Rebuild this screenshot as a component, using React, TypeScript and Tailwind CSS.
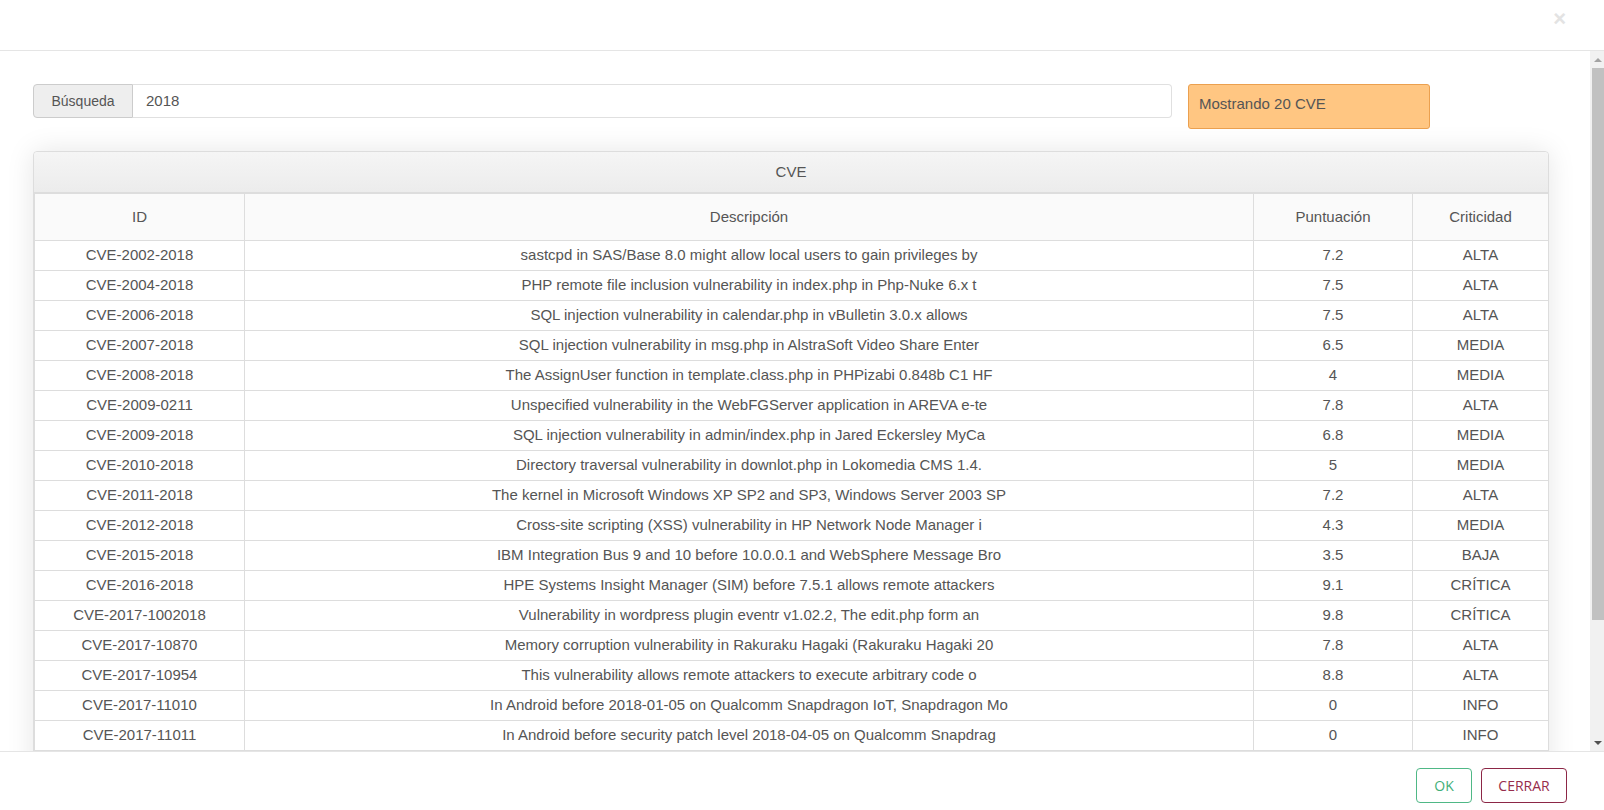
import React from "react";

interface CveRow {
	id: string;
	description: string;
	score: string;
	level: string;
}

const rows: CveRow[] = [
	{ id: "CVE-2002-2018", description: "sastcpd in SAS/Base 8.0 might allow local users to gain privileges by", score: "7.2", level: "ALTA" },
	{ id: "CVE-2004-2018", description: "PHP remote file inclusion vulnerability in index.php in Php-Nuke 6.x t", score: "7.5", level: "ALTA" },
	{ id: "CVE-2006-2018", description: "SQL injection vulnerability in calendar.php in vBulletin 3.0.x allows", score: "7.5", level: "ALTA" },
	{ id: "CVE-2007-2018", description: "SQL injection vulnerability in msg.php in AlstraSoft Video Share Enter", score: "6.5", level: "MEDIA" },
	{ id: "CVE-2008-2018", description: "The AssignUser function in template.class.php in PHPizabi 0.848b C1 HF", score: "4", level: "MEDIA" },
	{ id: "CVE-2009-0211", description: "Unspecified vulnerability in the WebFGServer application in AREVA e-te", score: "7.8", level: "ALTA" },
	{ id: "CVE-2009-2018", description: "SQL injection vulnerability in admin/index.php in Jared Eckersley MyCa", score: "6.8", level: "MEDIA" },
	{ id: "CVE-2010-2018", description: "Directory traversal vulnerability in downlot.php in Lokomedia CMS 1.4.", score: "5", level: "MEDIA" },
	{ id: "CVE-2011-2018", description: "The kernel in Microsoft Windows XP SP2 and SP3, Windows Server 2003 SP", score: "7.2", level: "ALTA" },
	{ id: "CVE-2012-2018", description: "Cross-site scripting (XSS) vulnerability in HP Network Node Manager i", score: "4.3", level: "MEDIA" },
	{ id: "CVE-2015-2018", description: "IBM Integration Bus 9 and 10 before 10.0.0.1 and WebSphere Message Bro", score: "3.5", level: "BAJA" },
	{ id: "CVE-2016-2018", description: "HPE Systems Insight Manager (SIM) before 7.5.1 allows remote attackers", score: "9.1", level: "CRÍTICA" },
	{ id: "CVE-2017-1002018", description: "Vulnerability in wordpress plugin eventr v1.02.2, The edit.php form an", score: "9.8", level: "CRÍTICA" },
	{ id: "CVE-2017-10870", description: "Memory corruption vulnerability in Rakuraku Hagaki (Rakuraku Hagaki 20", score: "7.8", level: "ALTA" },
	{ id: "CVE-2017-10954", description: "This vulnerability allows remote attackers to execute arbitrary code o", score: "8.8", level: "ALTA" },
	{ id: "CVE-2017-11010", description: "In Android before 2018-01-05 on Qualcomm Snapdragon IoT, Snapdragon Mo", score: "0", level: "INFO" },
	{ id: "CVE-2017-11011", description: "In Android before security patch level 2018-04-05 on Qualcomm Snapdrag", score: "0", level: "INFO" },
	{ id: "CVE-2017-11012", description: "In Android before security patch level 2018-04-05 on Qualcomm Snapdrag", score: "0", level: "INFO" },
	{ id: "CVE-2017-11013", description: "In Android before security patch level 2018-04-05 on Qualcomm Snapdrag", score: "0", level: "INFO" },
	{ id: "CVE-2017-11014", description: "In Android before security patch level 2018-04-05 on Qualcomm Snapdrag", score: "0", level: "INFO" },
];

const cell = "border border-[#dddddd] text-center px-2";

const Scrollbar = () => (
	<div className="w-[14px] h-full bg-[#f1f1f1] flex flex-col items-end">
		<div className="w-[12px] h-[17px] flex items-center justify-center">
			<div className="w-0 h-0 border-l-[4px] border-r-[4px] border-b-[4px] border-l-transparent border-r-transparent border-b-[#a3a3a3]" />
		</div>
		<div className="w-[12px] h-[552px] bg-[#c1c1c1]" />
		<div className="flex-1" />
		<div className="w-[12px] h-[17px] flex items-center justify-center">
			<div className="w-0 h-0 border-l-[4px] border-r-[4px] border-t-[4px] border-l-transparent border-r-transparent border-t-[#505050]" />
		</div>
	</div>
);

export default function App() {
	return (
		<div className="w-[1604px] h-[810px] bg-white flex flex-col overflow-hidden font-['Liberation_Sans',Arial,sans-serif] text-[#555555]">
			<div className="h-[51px] shrink-0 border-b border-[#e5e5e5] flex items-start justify-end pr-[38px] pt-[6px]">
				<span className="text-[22px] leading-[26px] font-bold text-[#e3e3e3]">×</span>
			</div>

			<div className="h-[700px] shrink-0 flex">
				<div className="flex-1 overflow-hidden pl-[33px] pt-[33px]">
					<div className="flex items-start">
						<div className="w-[1139px] h-[34px] flex">
							<div className="w-[100px] shrink-0 bg-[#eeeeee] border border-[#cccccc] rounded-l-[4px] flex items-center justify-center text-[14px]">
								Búsqueda
							</div>
							<div className="flex-1 border border-l-0 border-[#e0e0e0] rounded-r-[4px] flex items-center pl-[13px] text-[15px]">
								2018
							</div>
						</div>
						<div className="ml-[16px] w-[242px] h-[45px] bg-[#ffc682] border border-[#eba04f] rounded-[3px] flex items-center pl-[10px] pb-[4px] text-[15px]">
							Mostrando 20 CVE
						</div>
					</div>

					<div className="mt-[22px] w-[1516px] border border-[#dddddd] rounded-[4px] shadow-[0_0_28px_rgba(0,0,0,0.10)] bg-white">
						<div className="h-[41px] bg-gradient-to-b from-[#f5f5f5] to-[#ececec] border-b border-[#dddddd] rounded-t-[4px] flex items-center justify-center text-[15px]">
							CVE
						</div>
						<table className="w-[1514px] border-collapse table-fixed text-[15px]">
							<colgroup>
								<col className="w-[210px]" />
								<col className="w-[1009px]" />
								<col className="w-[159px]" />
								<col className="w-[136px]" />
							</colgroup>
							<thead>
								<tr className="h-[47px] bg-[#fafafa]">
									<th className={`${cell} font-normal`}>ID</th>
									<th className={`${cell} font-normal`}>Descripción</th>
									<th className={`${cell} font-normal`}>Puntuación</th>
									<th className={`${cell} font-normal`}>Criticidad</th>
								</tr>
							</thead>
							<tbody>
								{rows.map((row) => (
									<tr key={row.id} className="h-[30px]">
										<td className={cell}>{row.id}</td>
										<td className={`${cell} whitespace-nowrap overflow-hidden`}>{row.description}</td>
										<td className={cell}>{row.score}</td>
										<td className={cell}>{row.level}</td>
									</tr>
								))}
							</tbody>
						</table>
					</div>
				</div>
				<Scrollbar />
			</div>

			<div className="flex-1 border-t border-[#e5e5e5] flex items-start justify-end gap-[9px] pr-[37px] pt-[16px] font-['Open_Sans',sans-serif] text-[14px]">
				<button className="w-[56px] h-[35px] border border-[#4fb886] rounded-[4px] text-[#3faf78] bg-white">
					OK
				</button>
				<button className="w-[86px] h-[35px] border border-[#8c2746] rounded-[4px] text-[#972d4c] bg-white">
					CERRAR
				</button>
			</div>
		</div>
	);
}
